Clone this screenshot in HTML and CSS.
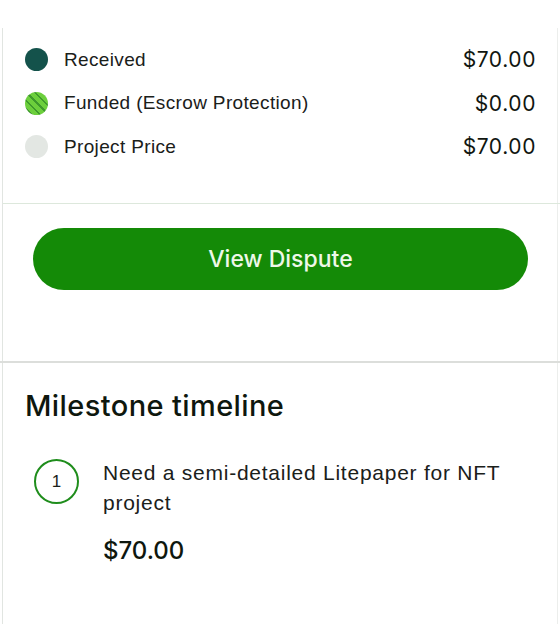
FILE: index.html
```html
<!DOCTYPE html>
<html>
<head>
<meta charset="utf-8">
<link rel="stylesheet" href="styles.css">
</head>
<body>
<div class="page">
  <div class="card">
    <section class="legend">
      <div class="row">
        <span class="dot dot-received"></span>
        <span class="label">Received</span>
        <span class="amount">$70.00</span>
      </div>
      <div class="row">
        <span class="dot dot-funded"></span>
        <span class="label">Funded (Escrow Protection)</span>
        <span class="amount">$0.00</span>
      </div>
      <div class="row">
        <span class="dot dot-price"></span>
        <span class="label">Project Price</span>
        <span class="amount">$70.00</span>
      </div>
    </section>
    <div class="divider"></div>
    <section class="actions">
      <button class="btn-primary">View Dispute</button>
    </section>
  </div>
  <div class="divider-thick"></div>
  <div class="card card-bottom">
    <h2 class="title">Milestone timeline</h2>
    <div class="milestone">
      <span class="step">1</span>
      <div class="milestone-body">
        <p class="milestone-text">Need a semi-detailed Litepaper for NFT project</p>
        <p class="milestone-price">$70.00</p>
      </div>
    </div>
  </div>
</div>
</body>
</html>
```
FILE: styles.css
```css
* { box-sizing: border-box; }
html, body { margin: 0; padding: 0; background: #ffffff; }
body {
  font-family: "Liberation Sans", Arial, sans-serif;
  color: #1b1f1b;
  width: 560px;
  height: 624px;
  overflow: hidden;
}
.page { padding-top: 28px; }
.card {
  margin: 0 2px 0 2px;
  border-left: 1px solid #e1e5e1;
  border-right: 1px solid #eceeec;
}
.legend {
  padding: 10px 21px 34px 22px;
  display: flex;
  flex-direction: column;
}
.row {
  display: flex;
  align-items: center;
  height: 43.5px;
}
.dot {
  width: 23px;
  height: 23px;
  border-radius: 50%;
  flex: none;
  margin-right: 16px;
}
.dot-received { background: #14524b; }
.dot-funded {
  background: repeating-linear-gradient(45deg, #6ccf3c 0 4px, #3e9a2c 4px 6px);
}
.dot-price { background: #e3e7e3; }
.label {
  font-size: 19px;
  letter-spacing: 0.35px;
  color: #1a201a;
  flex: 1;
}
.amount {
  font-family: "Inter", sans-serif;
  font-size: 21px;
  font-weight: 400;
  letter-spacing: 0.6px;
  color: #101610;
}
.divider { height: 1px; background: #dde8dc; margin-right: -3px; }
.actions { padding: 24px 29px 71px 30px; }
.btn-primary {
  display: block;
  width: 100%;
  height: 62px;
  border: none;
  border-radius: 31px;
  background: #148a07;
  color: #eef8e8;
  font-family: "Inter", sans-serif;
  font-weight: 500;
  font-size: 23px;
  cursor: pointer;
}
.divider-thick { height: 2px; background: #dcdedb; }
.card-bottom { padding: 26px 22px 0 22px; height: 262px; }
.title {
  margin: 0;
  font-family: "Inter", sans-serif;
  font-weight: 500;
  font-size: 29px;
  letter-spacing: 0.4px;
  line-height: 34px;
  color: #0e170e;
}
.milestone {
  display: flex;
  align-items: flex-start;
  margin-top: 35px;
  padding-left: 9px;
}
.step {
  flex: none;
  width: 45px;
  height: 45px;
  border-radius: 50%;
  border: 2.5px solid #1f8d1c;
  display: flex;
  align-items: center;
  justify-content: center;
  font-size: 17px;
  color: #1b1f1b;
  margin-top: 1.5px;
  margin-right: 24px;
}
.milestone-body { flex: 1; }
.milestone-text {
  margin: 0;
  font-size: 21px;
  letter-spacing: 0.75px;
  line-height: 30px;
  color: #1a201a;
}
.milestone-price {
  margin: 18px 0 0;
  font-family: "Inter", sans-serif;
  font-weight: 500;
  font-size: 24px;
  color: #0e170e;
}
```
